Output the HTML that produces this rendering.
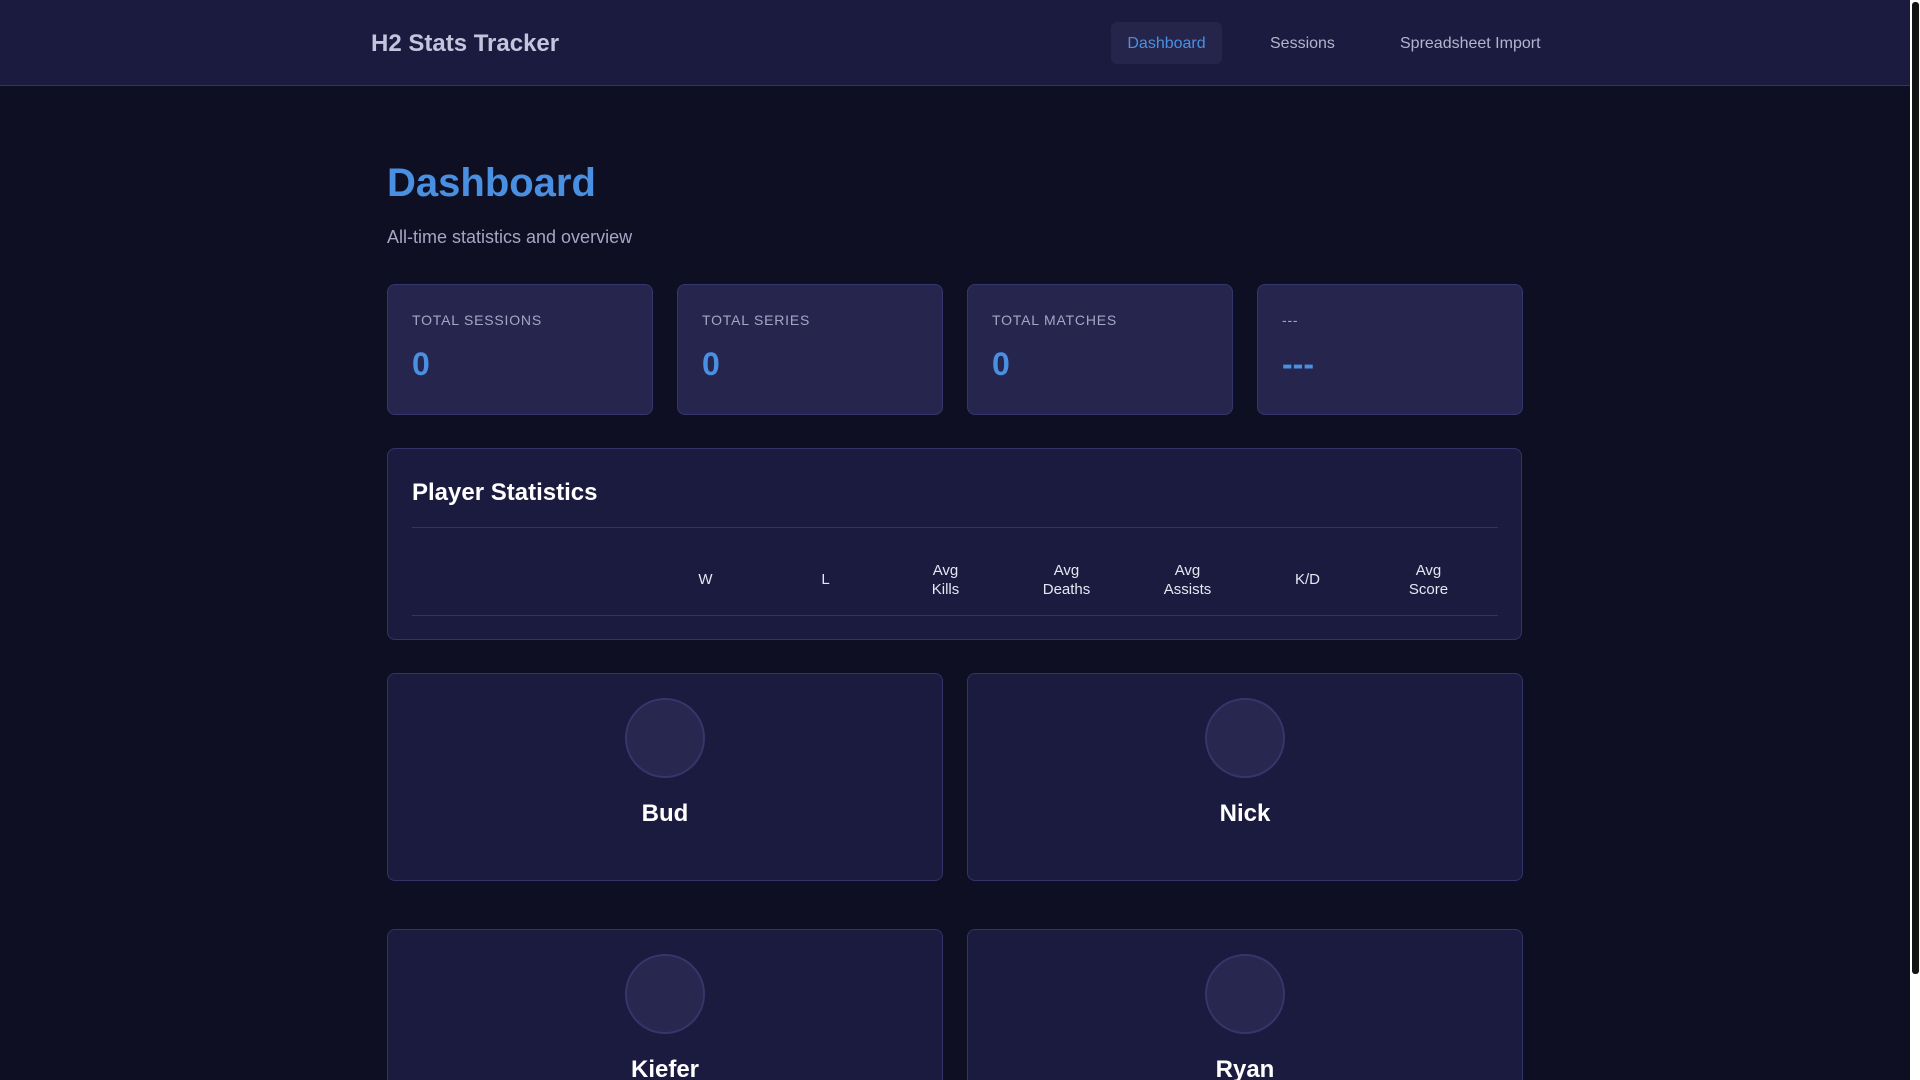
<!DOCTYPE html>
<html><head><meta charset="utf-8"><style>
*{box-sizing:border-box;margin:0;padding:0}
html,body{width:1920px;height:1080px;overflow:hidden;background:#0e0f22;font-family:"Liberation Sans",sans-serif}
#wrap{position:relative;width:1920px;height:1080px;overflow:hidden}
.abs{position:absolute}
.hdr{left:0;top:0;width:1910px;height:86px;background:#1b1b3f;border-bottom:1px solid #33336e}
.logo{left:371px;top:30px;font-size:24px;font-weight:bold;color:#c4c4de}
.nav{top:35px;font-size:16px;color:#b4b4d0}
.navact{left:1111px;top:22px;width:111px;height:42px;background:#25254c;border-radius:6px;color:#4a90e2;font-size:16px;text-align:center;line-height:44px}
h1{position:absolute;left:387px;top:159px;font-size:40px;color:#4a90e2;font-weight:bold;line-height:48px}
.sub{left:387px;top:227px;font-size:18px;color:#a6a6c4}
.stat{top:284px;width:266px;height:131px;background:#25254e;border:1px solid #36366e;border-radius:8px}
.lbl{position:absolute;left:24px;top:27px;font-size:14px;color:#a6a6c4;letter-spacing:.8px}
.val{position:absolute;left:24px;top:61px;font-size:32px;font-weight:bold;color:#4a90e2}
.ps{left:387px;top:448px;width:1135px;height:192px;background:#1b1b3f;border:1px solid #33336a;border-radius:8px}
.pst{position:absolute;left:24px;top:30px;font-size:24px;font-weight:bold;color:#fff}
.line{position:absolute;left:24px;width:1086px;height:1px;background:#33336a}
.th{position:absolute;width:121px;text-align:center;font-size:15px;color:#e6e6f2;line-height:19px}
.card{width:556px;height:208px;background:#1b1b3f;border:1px solid #33336a;border-radius:8px}
.av{position:absolute;left:237px;top:24px;width:80px;height:80px;border-radius:50%;background:#27274f;border:2px solid #36366c}
.nm{position:absolute;left:0;width:100%;top:126px;text-align:center;font-size:24px;font-weight:bold;color:#fff}
.sb{left:1910px;top:0;width:10px;height:1080px;background:#fff}
.th2{left:1912px;top:2px;width:7px;height:972px;background:#141414;border-radius:3px}
</style></head><body><div id="wrap">
<div class="abs hdr"></div>
<div class="abs logo">H2 Stats Tracker</div>
<div class="abs navact">Dashboard</div>
<div class="abs nav" style="left:1270px">Sessions</div>
<div class="abs nav" style="left:1400px">Spreadsheet Import</div>
<h1>Dashboard</h1>
<div class="abs sub">All-time statistics and overview</div>
<div class="abs stat" style="left:387px"><div class="lbl">TOTAL SESSIONS</div><div class="val">0</div></div>
<div class="abs stat" style="left:677px"><div class="lbl">TOTAL SERIES</div><div class="val">0</div></div>
<div class="abs stat" style="left:967px"><div class="lbl">TOTAL MATCHES</div><div class="val">0</div></div>
<div class="abs stat" style="left:1257px"><div class="lbl">---</div><div class="val">---</div></div>
<div class="abs ps">
<div class="pst">Player Statistics</div>
<div class="line" style="top:78px"></div>
<div class="th" style="left:257px;top:121px">W</div>
<div class="th" style="left:377px;top:121px">L</div>
<div class="th" style="left:497px;top:112px">Avg<br>Kills</div>
<div class="th" style="left:618px;top:112px">Avg<br>Deaths</div>
<div class="th" style="left:739px;top:112px">Avg<br>Assists</div>
<div class="th" style="left:859px;top:121px">K/D</div>
<div class="th" style="left:980px;top:112px">Avg<br>Score</div>
<div class="line" style="top:166px"></div>
</div>
<div class="abs card" style="left:387px;top:673px"><div class="av"></div><div class="nm">Bud</div></div>
<div class="abs card" style="left:967px;top:673px"><div class="av"></div><div class="nm">Nick</div></div>
<div class="abs card" style="left:387px;top:929px"><div class="av"></div><div class="nm">Kiefer</div></div>
<div class="abs card" style="left:967px;top:929px"><div class="av"></div><div class="nm">Ryan</div></div>
<div class="abs sb"></div><div class="abs th2"></div>
</div></body></html>
